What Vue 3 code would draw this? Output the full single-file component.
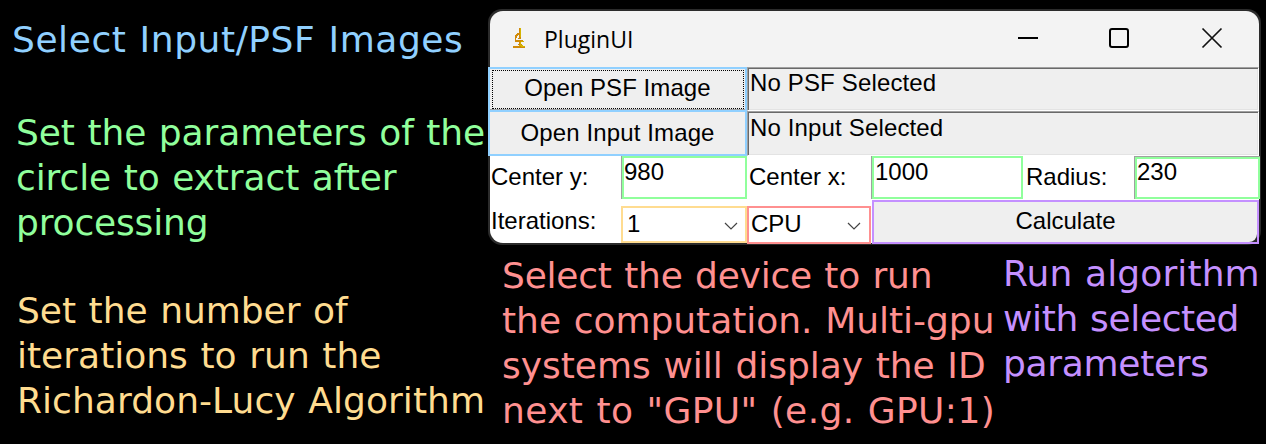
<script setup>
const notes = [
  { id: 'images', lines: [['Select Input/PSF Images', 0.56]] },
  { id: 'circle', lines: [['Set the parameters of the', -0.09], ['circle to extract after', -0.1], ['processing', -0.17]] },
  { id: 'iterations', lines: [['Set the number of', -0.04], ['iterations to run the', 0], ['Richardon-Lucy Algorithm', 0.05]] },
]
const deviceNote = {
  id: 'device',
  lines: [['Select the device to run', -0.22], ['the computation. Multi-gpu', -0.02], ['systems will display the ID', -0.02], ['next to "GPU" (e.g. GPU:1)', 0.41]],
}
const runNote = { id: 'run', lines: [['Run algorithm', 0.1], ['with selected', -0.38], ['parameters', -0.3]] }
</script>

<template>
  <main class="page">
    <section class="left">
      <p v-for="n in notes" :key="n.id" class="note" :class="n.id">
        <span v-for="[text, gap] in n.lines" :key="text" :style="{ letterSpacing: gap + 'px' }">{{ text }}</span>
      </p>
    </section>
    <section class="right">
      <div class="window">
        <header class="title">
          <svg class="logo" width="12" height="20" viewBox="0 0 12 20" shape-rendering="crispEdges">
            <path fill="#d08a08" d="M6 0h2v11H6zM4 5h2v2H4zM3 6h2v2H3zM2 7h1v6H2zM3 8h1v2H3zM2 12h8v2H2zM5 10h3v1H5zM6 14h2v2H6zM5 16h4v1H5zM0 18h12v2H0z" />
            <path fill="#d4b400" d="M7 0h1v9H7zM8 13h3v1H8zM7 14h1v4H7zM6 17h4v1H6zM8 18h4v1H8z" />
          </svg>
          <span class="name">PluginUI</span>
          <svg class="controls" width="206" height="22" viewBox="0 0 206 22" fill="none" stroke="#000">
            <path d="M1 11h20" stroke-width="2" />
            <rect x="93" y="2" width="18" height="18" rx="2" stroke-width="2" />
            <path d="M185.5 1.5l19 19M204.5 1.5l-19 19" stroke="#111" stroke-width="1.7" />
          </svg>
        </header>
        <div class="form">
          <button class="btn open psf"><span class="focus">Open PSF Image</span></button>
          <div class="status">No PSF Selected</div>
          <button class="btn open input"><span>Open Input Image</span></button>
          <div class="status second">No Input Selected</div>
          <label class="label">Center y:</label>
          <div class="field"><div class="box">980</div></div>
          <label class="label cx">Center x:</label>
          <div class="field"><div class="box thousand">1000</div></div>
          <label class="label radius">Radius:</label>
          <div class="field last"><div class="box">230</div></div>
          <label class="label">Iterations:</label>
          <div class="select yellow">
            <span>1</span>
            <svg width="14" height="8" viewBox="0 0 14 8" fill="none" stroke="#444" stroke-width="1.2"><path d="M1 1l6 6 6-6" /></svg>
          </div>
          <div class="select red">
            <span>CPU</span>
            <svg width="14" height="8" viewBox="0 0 14 8" fill="none" stroke="#444" stroke-width="1.2"><path d="M1 1l6 6 6-6" /></svg>
          </div>
          <button class="btn calc"><span>Calculate</span></button>
        </div>
      </div>
      <div class="below">
        <p v-for="n in [deviceNote, runNote]" :key="n.id" class="note" :class="n.id">
          <span v-for="[text, gap] in n.lines" :key="text" :style="{ letterSpacing: gap + 'px' }">{{ text }}</span>
        </p>
      </div>
    </section>
  </main>
</template>

<style>
body { margin: 0; background: #000; }
</style>

<style scoped>
* { box-sizing: border-box; }
.page { display: flex; width: 1266px; height: 444px; overflow: hidden; background: #000; }
.left { width: 488px; flex: none; padding-top: 17px; }
.right { width: 778px; flex: none; padding-top: 9px; }
.note { margin: 0; font: 36px/45px "DejaVu Sans", sans-serif; word-spacing: 1.2px; white-space: nowrap; }
.note span { display: block; }
.images { color: #90d0ff; padding-left: 12px; }
.circle { color: #90ff9c; padding-left: 16px; margin-top: 48px; }
.iterations { color: #ffdc90; padding-left: 17px; margin-top: 43px; }
.below { display: flex; padding-top: 6px; }
.device { color: #ff9090; width: 501px; padding: 2px 0 0 14px; }
.run { color: #c490ff; padding-left: 14px; }

.window {
  width: 773px; height: 236px; padding: 2px; border-radius: 14px; background: #2b2b2b;
  font: 24px/28px "Liberation Sans", Arial, sans-serif; color: #000;
}
.title { display: flex; align-items: flex-start; height: 56px; background: #f3f3f3; border-radius: 13px 13px 0 0; }
.logo { margin: 17px 0 0 23px; }
.name { margin: 12px 0 0 19px; font: 23px/32px "Open Sans", sans-serif; }
.controls { margin: 16px 36px 0 auto; }

.form {
  display: grid; height: 176px; width: 769px; background: #fff; border-radius: 0 0 13px 13px;
  grid-template-columns: 131px 126px 124px 152px 111px 125px;
  grid-template-rows: 44px 45px 44px 44px;
}
.btn { font: inherit; color: #000; padding: 0; margin: 0; background: #efefef; border-radius: 0; text-align: center; }
.open { grid-column: span 2; border: 2px solid #90d0ff; margin-left: -2px; position: relative; }
.psf { height: 45px; padding: 1px 1px 1px 2px; display: flex; letter-spacing: .06px; box-shadow: inset 0 -1px #a0a0a0; }
.focus { flex: 1; height: 39px; border: 1px dotted #000; line-height: 34px; padding-right: 1px; }
.input { height: 46px; margin-top: -1px; letter-spacing: .13px; }
.input span { display: block; height: 42px; line-height: 41px; }
.status {
  grid-column: span 4; height: 44px; background: #efefef; padding: 1px 0 0 2px; letter-spacing: .15px;
  border: 1px solid; border-color: #a0a0a0 #fff #fff #a0a0a0;
  box-shadow: inset 1px 1px #696969, inset -1px -1px #e3e3e3;
}
.second { padding-top: 2px; height: 45px; }
.label { padding: 7px 0 0 1px; }
.cx { padding-left: 2px; }
.radius { padding-left: 3px; }
.field { border-left: 1px solid #a0a0a0; height: 43px; }
.box { height: 43px; border: 2px solid #90ff9c; line-height: 28px; padding-left: 0; }
.thousand { padding-left: 1px; }
.last { margin-right: -1px; border-top: 1px solid #a0a0a0; }
.last .box { height: 42px; line-height: 26px; }
.select { margin-top: 6px; height: 37px; border: 2px solid; background: #fff; display: flex; justify-content: space-between; padding: 2px 7px 0 4px; }
.select svg { margin-top: 12px; }
.yellow { border-color: #ffdc90; }
.red { height: 38px; border-color: #ff9090; padding: 2px 8px 0 2px; }
.calc { grid-column: span 3; height: 44px; margin-left: 1px; border: 2px solid #c490ff; background: #2b2b2b; }
.calc span { display: block; height: 40px; line-height: 37px; background: #efefef; border-bottom-right-radius: 8px; }
</style>
